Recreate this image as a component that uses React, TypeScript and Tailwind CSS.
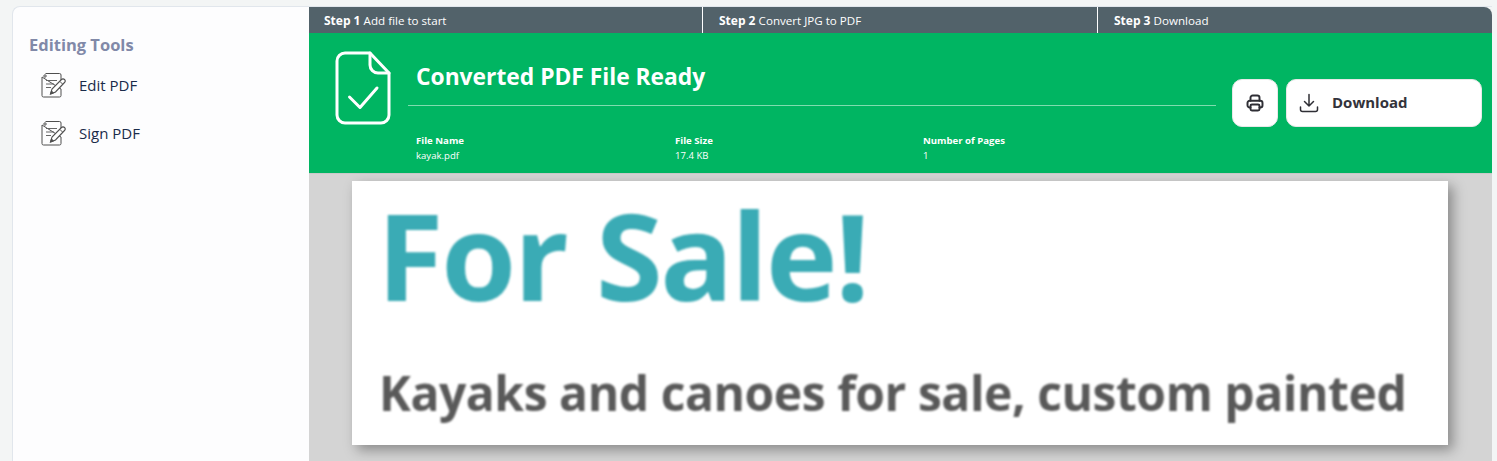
const ui = { fontFamily: '"Open Sans", "Noto Sans", sans-serif' };

function EditIcon() {
  return (
    <svg width="25" height="26" viewBox="0 0 25 26" fill="none" stroke="#4f4f4f" strokeWidth="1">
      <path d="M4.500 1.500h14a1.500 1.500 0 0 1 1.500 1.500v5M20 17v6.500a1.500 1.500 0 0 1-1.500 1.500h-16A1.500 1.500 0 0 1 1 23.500V5z" />
      <circle cx="4" cy="4" r="1.200" />
      <path d="M5 8.500h11M5 12h8M5 15.500h5" stroke="#666" strokeWidth="1.200" />
      <path d="M9.500 22l1.500-5 9.500-9.500a1.700 1.700 0 0 1 3 3L14.500 20z" fill="white" strokeWidth="1.100" />
      <path d="M9.500 22l1-3 2 1.900z" fill="#4f4f4f" />
      <path d="M19 9.500l2.500 2.500" />
    </svg>
  );
}

function FileCheckIcon() {
  return (
    <svg width="56" height="74" viewBox="0 0 56 74" fill="none" stroke="white" strokeWidth="3" strokeLinejoin="round" strokeLinecap="round">
      <path d="M10 2h25l19 20v42a8 8 0 0 1-8 8H10a8 8 0 0 1-8-8V10a8 8 0 0 1 8-8z" />
      <path d="M35 2v12a8 8 0 0 0 8 8h11" />
      <path d="M14.500 46l10.500 10.500L42 37" />
    </svg>
  );
}

function PrintIcon() {
  return (
    <svg width="18" height="18" viewBox="0 0 24 24" fill="none" stroke="#2f2f35" strokeWidth="2.600" strokeLinecap="round" strokeLinejoin="round">
      <path d="M6 9V5a3 3 0 0 1 3-3h6a3 3 0 0 1 3 3v4" />
      <path d="M6 18H5a3 3 0 0 1-3-3v-3a3 3 0 0 1 3-3h14a3 3 0 0 1 3 3v3a3 3 0 0 1-3 3h-1" />
      <rect x="6" y="14" width="12" height="8" rx="2" />
    </svg>
  );
}

function DownloadIcon() {
  return (
    <svg width="20" height="20" viewBox="0 0 20 20" fill="none" stroke="#2f2f35" strokeWidth="1.500" strokeLinecap="round" strokeLinejoin="round">
      <path d="M10 1.500v11.500M5.500 8.500l4.500 4.500 4.500-4.500" />
      <path d="M1.500 14v2.500a2 2 0 0 0 2 2h13a2 2 0 0 0 2-2V14" />
    </svg>
  );
}

function Tool({ label }: { label: string }) {
  return (
    <div className="flex h-12 items-center pl-[28px]">
      <EditIcon />
      <span className="ml-[13px] text-[15px] text-[#1a2b4a]">{label}</span>
    </div>
  );
}

function Step({ num, text, className }: { num: string; text: string; className: string }) {
  return (
    <div className={`text-[12px] leading-[27px] text-white ${className}`}>
      <b className="font-bold">{num}</b> <span className="text-[11.600px]">{text}</span>
    </div>
  );
}

function Meta({ label, value, width }: { label: string; value: string; width: string }) {
  return (
    <div className={`${width} text-[9.600px] leading-[15px] text-white`}>
      <div className="font-bold">{label}</div>
      <div>{value}</div>
    </div>
  );
}

export default function App() {
  return (
    <div className="flex h-[461px] overflow-hidden bg-[#f3f5f5] pt-[6px] pl-3 pr-[5px]" style={ui}>
      {/* Sidebar */}
      <aside className="w-[297px] shrink-0 rounded-tl-lg border-l border-t border-[#e1e6ec] bg-[#fdfdfe] pt-[26px]">
        <h3 className="pl-[16px] text-[16.500px] font-bold leading-[24px] text-[#8189a8]">Editing Tools</h3>
        <div className="mt-[4px]">
          <Tool label="Edit PDF" />
          <Tool label="Sign PDF" />
        </div>
      </aside>

      {/* Main */}
      <main className="flex min-w-0 flex-1 flex-col border-t border-[#e1e6ec]">
        <div className="flex h-[26px] shrink-0 overflow-hidden rounded-tr-lg bg-[#52626a]">
          <Step className="w-[393px] pl-[15px]" num="Step 1" text="Add file to start" />
          <Step className="w-[395px] border-l border-white pl-[16px]" num="Step 2" text="Convert JPG to PDF" />
          <Step className="flex-1 border-l border-white pl-[16px]" num="Step 3" text="Download" />
        </div>

        <div className="flex h-[140px] shrink-0 bg-[#00b562]">
          <div className="ml-[26px] mt-[18px] shrink-0">
            <FileCheckIcon />
          </div>
          <div className="ml-[17px] w-[808px] shrink-0">
            <div className="flex h-[72px] items-end pb-[12px] pl-[8px] text-[22.800px] font-bold leading-[32px] text-white">
              Converted PDF File Ready
            </div>
            <div className="h-px bg-[#7fdcae]" />
            <div className="mt-[27px] flex pl-[8px]">
              <Meta width="w-[259px]" label="File Name" value="kayak.pdf" />
              <Meta width="w-[248px]" label="File Size" value="17.4 KB" />
              <Meta width="w-[200px]" label="Number of Pages" value="1" />
            </div>
          </div>
          <div className="ml-4 mt-[46px] flex gap-2">
            <button className="flex h-12 w-[46px] items-center justify-center rounded-[10px] border border-[#e8e8e8] bg-white">
              <PrintIcon />
            </button>
            <button className="flex h-12 w-[196px] items-center rounded-[10px] border border-[#e8e8e8] bg-white pl-[12px] text-[15px] font-bold text-[#33333b]">
              <DownloadIcon />
              <span className="ml-[13px] -translate-y-px">Download</span>
            </button>
          </div>
        </div>

        {/* PDF preview */}
        <div className="min-h-0 flex-1 border-t border-[#c9c9c9] bg-[#d4d4d4] pl-[43px] pt-[7px]">
          <div className="h-[264px] w-[1096px] bg-white shadow-[5px_5px_12px_rgba(0,0,0,0.35)]">
            <div className="whitespace-nowrap pl-[25px] pt-[3px] text-[121px] font-bold leading-[140px] tracking-[-2.200px] text-[#3aabb5] blur-[1px]">
              For Sale!
            </div>
            <div className="mt-[40px] whitespace-nowrap pl-[27px] text-[48px] font-bold leading-[58px] tracking-[-0.450px] text-[#595959] blur-[0.8px]">
              Kayaks and canoes for sale, custom painted
            </div>
          </div>
        </div>
      </main>
    </div>
  );
}
